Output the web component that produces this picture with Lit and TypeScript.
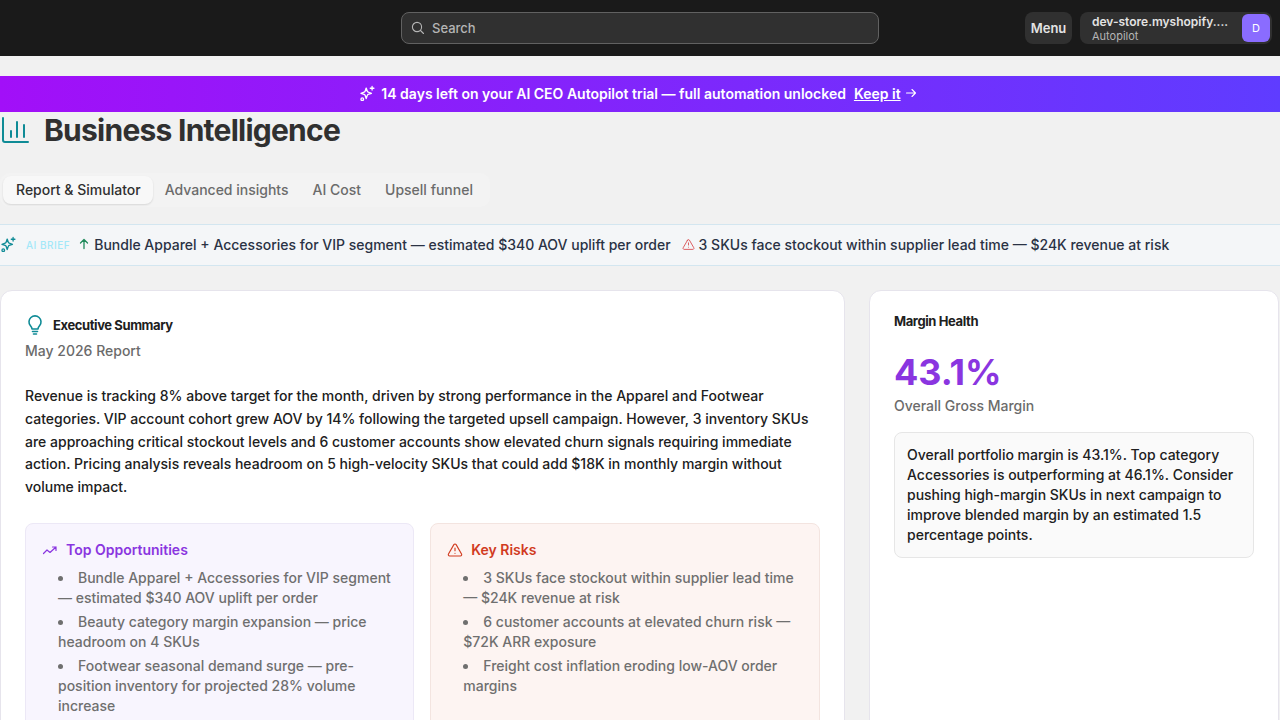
import { LitElement, html, css, svg } from "lit";
import { customElement } from "lit/decorators.js";

const sparkle = svg`<path d="M9.9 4.2 11.4 8.6a2 2 0 0 0 1.3 1.3l4.4 1.5-4.4 1.5a2 2 0 0 0-1.3 1.3L9.9 18.6l-1.5-4.4a2 2 0 0 0-1.3-1.3l-4.4-1.5 4.4-1.5a2 2 0 0 0 1.3-1.3z"/><path d="M18 2v5M15.5 4.5h5"/><circle cx="4.5" cy="19.500" r="1.8"/>`;

const warning = svg`<path d="M10.3 3.9 2.2 18a2 2 0 0 0 1.7 3h16.2a2 2 0 0 0 1.7-3L13.7 3.9a2 2 0 0 0-3.4 0zM12 9v4M12 17h.01"/>`;

const opportunities = [
  "Bundle Apparel + Accessories for VIP segment — estimated $340 AOV uplift per order",
  "Beauty category margin expansion — price headroom on 4 SKUs",
  "Footwear seasonal demand surge — pre-position inventory for projected 28% volume increase",
];
const risks = [
  "3 SKUs face stockout within supplier lead time — $24K revenue at risk",
  "6 customer accounts at elevated churn risk — $72K ARR exposure",
  "Freight cost inflation eroding low-AOV order margins",
];

@customElement("app-root")
export class AppRoot extends LitElement {
  static styles = css`
    :host {
      display: block;
      height: 720px;
      overflow: hidden;
      background: #f1f1f1;
      font-family: Inter, "Liberation Sans", sans-serif;
      color: #303030;
    }
    svg {
      display: block;
      flex: none;
      fill: none;
      stroke: currentColor;
      stroke-linecap: round;
      stroke-linejoin: round;
    }
    .topbar {
      height: 56px;
      background: #1a1a1a;
      display: grid;
      grid-template-columns: 1fr 478px 1fr;
      align-items: center;
      box-sizing: border-box;
    }
    .search {
      grid-column: 2;
      height: 32px;
      box-sizing: border-box;
      border: 1px solid #616161;
      border-radius: 8px;
      background: #303030;
      display: flex;
      align-items: center;
      gap: 6px;
      padding-left: 8px;
      color: #b5b5b5;
      font-size: 13px;
      font-weight: 450;
    }
    .top-right {
      grid-column: 3;
      display: flex;
      justify-content: flex-end;
      gap: 8px;
      padding-right: 8px;
    }
    .menu {
      height: 32px;
      width: 47px;
      display: flex;
      align-items: center;
      justify-content: center;
      border-radius: 8px;
      background: #303030;
      color: #e3e3e3;
      font-size: 13px;
      font-weight: 600;
    }
    .store {
      width: 192px;
      height: 32px;
      box-sizing: border-box;
      border-radius: 8px;
      background: #303030;
      display: flex;
      align-items: center;
      justify-content: space-between;
      padding: 0 2px 0 12px;
    }
    .store-name {
      color: #e3e3e3;
      font-size: 12px;
      font-weight: 600;
      line-height: 15px;
    }
    .store-plan {
      color: #b5b5b5;
      font-size: 11px;
      line-height: 14px;
    }
    .avatar {
      width: 28px;
      height: 28px;
      border-radius: 6px;
      background: #8a6cff;
      color: #fff;
      font-size: 11px;
      display: flex;
      align-items: center;
      justify-content: center;
    }
    .banner {
      margin-top: 20px;
      height: 36px;
      box-sizing: border-box;
      padding-bottom: 2px;
      background: linear-gradient(90deg, #a20ff8 0%, #5f3cff 100%);
      color: #fff;
      display: flex;
      align-items: center;
      justify-content: center;
      gap: 8px;
      font-size: 14px;
      font-weight: 600;
    }
    .banner > svg {
      margin-right: -2px;
    }
    .keep {
      display: flex;
      align-items: center;
      gap: 3px;
      margin-right: 3px;
    }
    .keep span {
      text-decoration: underline;
    }
    .title {
      display: flex;
      align-items: center;
      gap: 14px;
      height: 36px;
    }
    .title svg {
      color: #0f8b96;
    }
    h1 {
      margin: 0;
      font-size: 30px;
      line-height: 36px;
      font-weight: 700;
      letter-spacing: -0.75px;
      color: #303030;
    }
    .tabs {
      margin-top: 25px;
      box-sizing: border-box;
      width: 490px;
      height: 34px;
      padding: 3px;
      border-radius: 10px;
      background: #f3f3f3;
      display: flex;
      font-size: 14px;
      font-weight: 500;
      color: #6b6b6b;
    }
    .tab {
      padding: 0 12px;
      line-height: 28px;
    }
    .tab.active {
      padding: 0 12px 0 13px;
      border-radius: 8px;
      background: #f8f8f8;
      color: #303030;
      box-shadow: 0 1px 2px rgba(0, 0, 0, 0.12);
    }
    .brief {
      margin-top: 17px;
      height: 42px;
      box-sizing: border-box;
      padding-bottom: 2px;
      background: #f4f6f8;
      border-top: 1px solid #d3e6f0;
      border-bottom: 1px solid #d3e6f0;
      display: flex;
      align-items: center;
      font-size: 14px;
      font-weight: 450;
      color: #2a3244;
    }
    .brief-label {
      color: #a3e8f8;
      font-size: 10px;
      letter-spacing: 0.5px;
      margin: 2px 8px 0 10px;
    }
    .brief-item {
      display: flex;
      align-items: center;
      gap: 4px;
      margin-right: 11px;
    }
    .cols {
      margin-top: 24px;
      display: grid;
      grid-template-columns: 844.5px 410px;
      gap: 24.5px;
      align-items: start;
    }
    .card {
      box-sizing: border-box;
      height: 600px;
      background: #fff;
      border: 1px solid #e6e4ec;
      border-radius: 12px;
      padding: 24px;
    }
    .card-head {
      display: flex;
      align-items: center;
      gap: 10px;
      height: 20px;
      font-size: 13px;
      font-weight: 650;
      letter-spacing: -0.4px;
      color: #202020;
    }
    .card-head svg {
      color: #0f8b96;
    }
    .sub {
      margin-top: 6px;
      font-size: 14px;
      line-height: 20px;
      font-weight: 450;
      color: #6b6b6b;
    }
    .summary {
      margin: 24px 0 0;
      font-size: 14px;
      line-height: 22.75px;
      font-weight: 450;
      color: #202020;
    }
    .boxes {
      margin-top: 24px;
      display: grid;
      grid-template-columns: 1fr 1fr;
      gap: 16px;
    }
    .box {
      height: 260px;
      box-sizing: border-box;
      padding: 16px;
      border-radius: 8px;
      border: 1px solid #ece8f6;
    }
    .box.up {
      background: #f8f5fe;
    }
    .box.risk {
      background: #fdf4f2;
      border-color: #f3e4e0;
    }
    .box-head {
      display: flex;
      align-items: center;
      gap: 8px;
      height: 20px;
      font-size: 14px;
      font-weight: 600;
    }
    .up .box-head {
      color: #8a35e0;
    }
    .risk .box-head {
      color: #d13b1f;
    }
    ul {
      margin: 8px 0 0;
      padding: 0 0 0 16px;
      list-style-position: inside;
      font-size: 14px;
      line-height: 20px;
      font-weight: 450;
      color: #6f6f6f;
    }
    li + li {
      margin-top: 4px;
    }
    .margin-title {
      font-size: 13px;
      font-weight: 650;
      letter-spacing: -0.4px;
      line-height: 12px;
      color: #202020;
    }
    .margin-value {
      margin-top: 23px;
      font-size: 36px;
      line-height: 44px;
      font-weight: 700;
      color: #8a35e0;
    }
    .margin-value + .sub {
      margin-top: 2px;
    }
    .note {
      margin-top: 16px;
      border: 1px solid #e6e6e6;
      border-radius: 8px;
      background: #fafafa;
      padding: 12px;
      font-size: 14px;
      line-height: 20px;
      font-weight: 450;
      color: #202020;
    }
  `;

  render() {
    return html`
      <div class="topbar">
        <div class="search">
          <svg width="16" height="16" viewBox="0 0 16 16" stroke-width="1.1"><circle cx="7" cy="7" r="4.6"/><path d="m10.500 10.500 3 3"/></svg>
          Search
        </div>
        <div class="top-right">
          <div class="menu">Menu</div>
          <div class="store">
            <div>
              <div class="store-name">dev-store.myshopify....</div>
              <div class="store-plan">Autopilot</div>
            </div>
            <div class="avatar">D</div>
          </div>
        </div>
      </div>

      <div class="banner">
        <svg width="16" height="16" viewBox="0 0 22 22" stroke-width="1.8">${sparkle}</svg>
        14 days left on your AI CEO Autopilot trial — full automation unlocked
        <div class="keep">
          <span>Keep it</span>
          <svg width="14" height="14" viewBox="0 0 14 14" stroke-width="1.1"><path d="M2.500 7h9M8 3.500 11.500 7 8 10.500"/></svg>
        </div>
      </div>

      <div class="title">
        <svg width="30" height="30" viewBox="0 0 30 30" stroke-width="2"><path d="M3 3v22a2 2 0 0 0 2 2h23M11 22v-6M17 22V7M24 22V10"/></svg>
        <h1>Business Intelligence</h1>
      </div>

      <div class="tabs">
        <div class="tab active">Report &amp; Simulator</div>
        <div class="tab">Advanced insights</div>
        <div class="tab">AI Cost</div>
        <div class="tab">Upsell funnel</div>
      </div>

      <div class="brief">
        <svg width="16" height="16" viewBox="0 0 22 22" stroke-width="1.8" style="color:#0f8b96">${sparkle}</svg>
        <span class="brief-label">AI BRIEF</span>
        <div class="brief-item">
          <svg width="12" height="12" viewBox="0 0 12 12" stroke-width="1.3" style="color:#1f8a5b"><path d="M6 10.500v-9M2.500 5 6 1.500 9.500 5"/></svg>
          Bundle Apparel + Accessories for VIP segment — estimated $340 AOV uplift per order
        </div>
        <div class="brief-item">
          <svg width="13" height="13" viewBox="0 0 24 24" stroke-width="1.600" style="color:#d8474a">${warning}</svg>
          3 SKUs face stockout within supplier lead time — $24K revenue at risk
        </div>
      </div>

      <div class="cols">
        <div class="card">
          <div class="card-head">
            <svg width="18" height="20" viewBox="-1 0 18 20" stroke-width="1.600"><path d="M6 14c0-1.600-.8-2.300-1.700-3.400A6 6 0 1 1 13.700 10.600C12.800 11.700 12 12.400 12 14zM6.500 16.500h5M7.500 19h3"/></svg>
            Executive Summary
          </div>
          <div class="sub">May 2026 Report</div>
          <p class="summary">Revenue is tracking 8% above target for the month, driven by strong performance in the Apparel and Footwear categories. VIP account cohort grew AOV by 14% following the targeted upsell campaign. However, 3 inventory SKUs are approaching critical stockout levels and 6 customer accounts show elevated churn signals requiring immediate action. Pricing analysis reveals headroom on 5 high-velocity SKUs that could add $18K in monthly margin without volume impact.</p>
          <div class="boxes">
            <div class="box up">
              <div class="box-head">
                <svg width="16" height="16" viewBox="0 0 16 16" stroke-width="1.200"><path d="m1.500 11.500 3.500-3.500 3 2.500 6-5.500M10.500 5h3.500v3.500"/></svg>
                Top Opportunities
              </div>
              <ul>${opportunities.map((item) => html`<li>${item}</li>`)}</ul>
            </div>
            <div class="box risk">
              <div class="box-head">
                <svg width="16" height="16" viewBox="0 0 24 24" stroke-width="1.700">${warning}</svg>
                Key Risks
              </div>
              <ul>${risks.map((item) => html`<li>${item}</li>`)}</ul>
            </div>
          </div>
        </div>

        <div class="card">
          <div class="margin-title">Margin Health</div>
          <div class="margin-value">43.1%</div>
          <div class="sub">Overall Gross Margin</div>
          <div class="note">Overall portfolio margin is 43.1%. Top category Accessories is outperforming at 46.1%. Consider pushing high-margin SKUs in next campaign to improve blended margin by an estimated 1.5 percentage points.</div>
        </div>
      </div>
    `;
  }
}
